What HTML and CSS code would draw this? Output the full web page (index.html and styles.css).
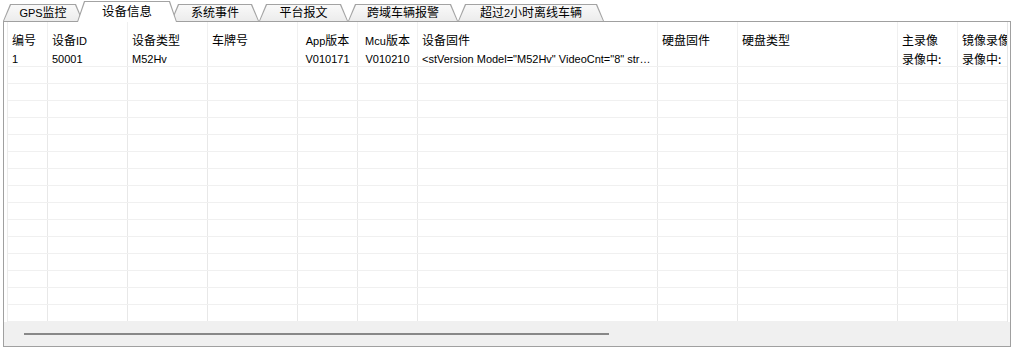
FILE: index.html
```html
<!DOCTYPE html>
<html>
<head>
<meta charset="utf-8">
<title>设备信息</title>
<link rel="stylesheet" href="styles.css">
</head>
<body>
<div class="tabs">
  <div class="tab t1"><span class="label"><span class="lat">GPS</span>监控</span></div>
  <div class="tab t2 active"><span class="label">设备信息</span></div>
  <div class="tab t3"><span class="label">系统事件</span></div>
  <div class="tab t4"><span class="label">平台报文</span></div>
  <div class="tab t5"><span class="label">跨域车辆报警</span></div>
  <div class="tab t6"><span class="label">超过<span class="lat">2</span>小时离线车辆</span></div>
</div>
<div class="panel">
  <div class="grid">
    <div class="row head">
      <span>编号</span>
      <span>设备<span class="lat">ID</span></span>
      <span>设备类型</span>
      <span>车牌号</span>
      <span class="mid"><span class="lat">App</span>版本</span>
      <span class="mid"><span class="lat">Mcu</span>版本</span>
      <span>设备固件</span>
      <span>硬盘固件</span>
      <span>硬盘类型</span>
      <span>主录像</span>
      <span>镜像录像</span>
    </div>
    <div class="row data">
      <span>1</span>
      <span>50001</span>
      <span>M52Hv</span>
      <span></span>
      <span class="mid">V010171</span>
      <span class="mid">V010210</span>
      <span class="ell">&lt;stVersion Model="M52Hv" VideoCnt="8" strVersion="V010171" strMcuVersion="V010210"&gt;</span>
      <span></span>
      <span></span>
      <span class="cjk">录像中:</span>
      <span class="cjk">录像中:</span>
    </div>
    <div class="row data"><span></span><span></span><span></span><span></span><span></span><span></span><span></span><span></span><span></span><span></span><span></span></div>
    <div class="row data"><span></span><span></span><span></span><span></span><span></span><span></span><span></span><span></span><span></span><span></span><span></span></div>
    <div class="row data"><span></span><span></span><span></span><span></span><span></span><span></span><span></span><span></span><span></span><span></span><span></span></div>
    <div class="row data"><span></span><span></span><span></span><span></span><span></span><span></span><span></span><span></span><span></span><span></span><span></span></div>
    <div class="row data"><span></span><span></span><span></span><span></span><span></span><span></span><span></span><span></span><span></span><span></span><span></span></div>
    <div class="row data"><span></span><span></span><span></span><span></span><span></span><span></span><span></span><span></span><span></span><span></span><span></span></div>
    <div class="row data"><span></span><span></span><span></span><span></span><span></span><span></span><span></span><span></span><span></span><span></span><span></span></div>
    <div class="row data"><span></span><span></span><span></span><span></span><span></span><span></span><span></span><span></span><span></span><span></span><span></span></div>
    <div class="row data"><span></span><span></span><span></span><span></span><span></span><span></span><span></span><span></span><span></span><span></span><span></span></div>
    <div class="row data"><span></span><span></span><span></span><span></span><span></span><span></span><span></span><span></span><span></span><span></span><span></span></div>
    <div class="row data"><span></span><span></span><span></span><span></span><span></span><span></span><span></span><span></span><span></span><span></span><span></span></div>
    <div class="row data"><span></span><span></span><span></span><span></span><span></span><span></span><span></span><span></span><span></span><span></span><span></span></div>
    <div class="row data"><span></span><span></span><span></span><span></span><span></span><span></span><span></span><span></span><span></span><span></span><span></span></div>
    <div class="row data"><span></span><span></span><span></span><span></span><span></span><span></span><span></span><span></span><span></span><span></span><span></span></div>
    <div class="row data"><span></span><span></span><span></span><span></span><span></span><span></span><span></span><span></span><span></span><span></span><span></span></div>
  </div>
  <div class="hscroll"><div class="thumb"></div></div>
</div>
</body>
</html>
```

FILE: styles.css
```css
* { box-sizing: border-box; }

body {
  margin: 0;
  background: #ffffff;
  color: #000000;
  font-family: "Noto Sans CJK SC", sans-serif;
  font-size: 12px;
}

.lat {
  font-family: "Liberation Sans", sans-serif;
  font-size: 11px;
  line-height: 1;
}

/* ---------- tabs ---------- */
.tabs {
  display: flex;
  align-items: flex-end;
  height: 22px;
  padding-left: 3px;
}

.tab {
  position: relative;
  isolation: isolate;
  z-index: 1;
  display: flex;
  justify-content: center;
  align-items: flex-start;
  height: 17px;
  margin-bottom: 1px;
  white-space: nowrap;
}

.label {
  display: block;
  line-height: 16px;
}

.tab::before,
.tab::after {
  content: "";
  position: absolute;
  z-index: -1;
  clip-path: polygon(0 100%, 7px 0, calc(100% - 7px) 0, 100% 100%);
}

.tab::before {
  inset: 0;
  background: #a3a3a3;
}

.tab::after {
  inset: 1px 1px 0 1px;
  background: linear-gradient(#f9f9f9, #ececec);
}

.tab.active {
  z-index: 3;
  height: 21px;
  margin: 0 -6px;
  padding-top: 2px;
}

.tab.active .label {
  font-size: 12.5px;
}

.tab.active::after {
  background: #ffffff;
}

.t1 { width: 80px; }
.t2 { width: 100px; }
.t3 { width: 88px; }
.t4 { width: 89px; }
.t5 { width: 110px; }
.t6 { width: 146px; }

/* ---------- panel ---------- */
.panel {
  display: flex;
  flex-direction: column;
  width: 1008px;
  height: 326px;
  margin: -1px 0 0 3px;
  border: 1px solid #a0a0a0;
  background: #ffffff;
}

.grid {
  width: 1001px;
  margin-left: 3px;
  border-left: 1px solid #ececec;
  border-right: 1px solid #e6e6e6;
  overflow: hidden;
}

.row {
  display: grid;
  grid-template-columns: 40px 80px 80px 90px 60px 60px 240px 80px 160px 60px 60px;
  width: 1010px;
}

.row > span {
  display: block;
  padding-left: 4px;
  border-right: 1px solid #e8e8e8;
  white-space: nowrap;
  overflow: hidden;
}

.row > span.mid {
  padding-left: 0;
  text-align: center;
}

.head {
  height: 28px;
}

.head > span {
  padding-top: 9px;
  line-height: 17px;
  border-right-color: #f0f0f0;
}

.data {
  height: 17px;
  border-bottom: 1px solid #f0f0f0;
  font-family: "Liberation Sans", "Noto Sans CJK SC", sans-serif;
  font-size: 11px;
}

.data > span {
  padding-top: 2px;
  line-height: 14px;
}

.data > span.cjk {
  font-family: "Noto Sans CJK SC", sans-serif;
  font-size: 12px;
}

.data > span.ell {
  text-overflow: ellipsis;
}

/* ---------- horizontal scrollbar ---------- */
.hscroll {
  flex: 1;
  background: #f0f0f0;
  padding: 11px 0 0 20px;
}

.thumb {
  width: 585px;
  height: 2px;
  background: #888888;
}
```
